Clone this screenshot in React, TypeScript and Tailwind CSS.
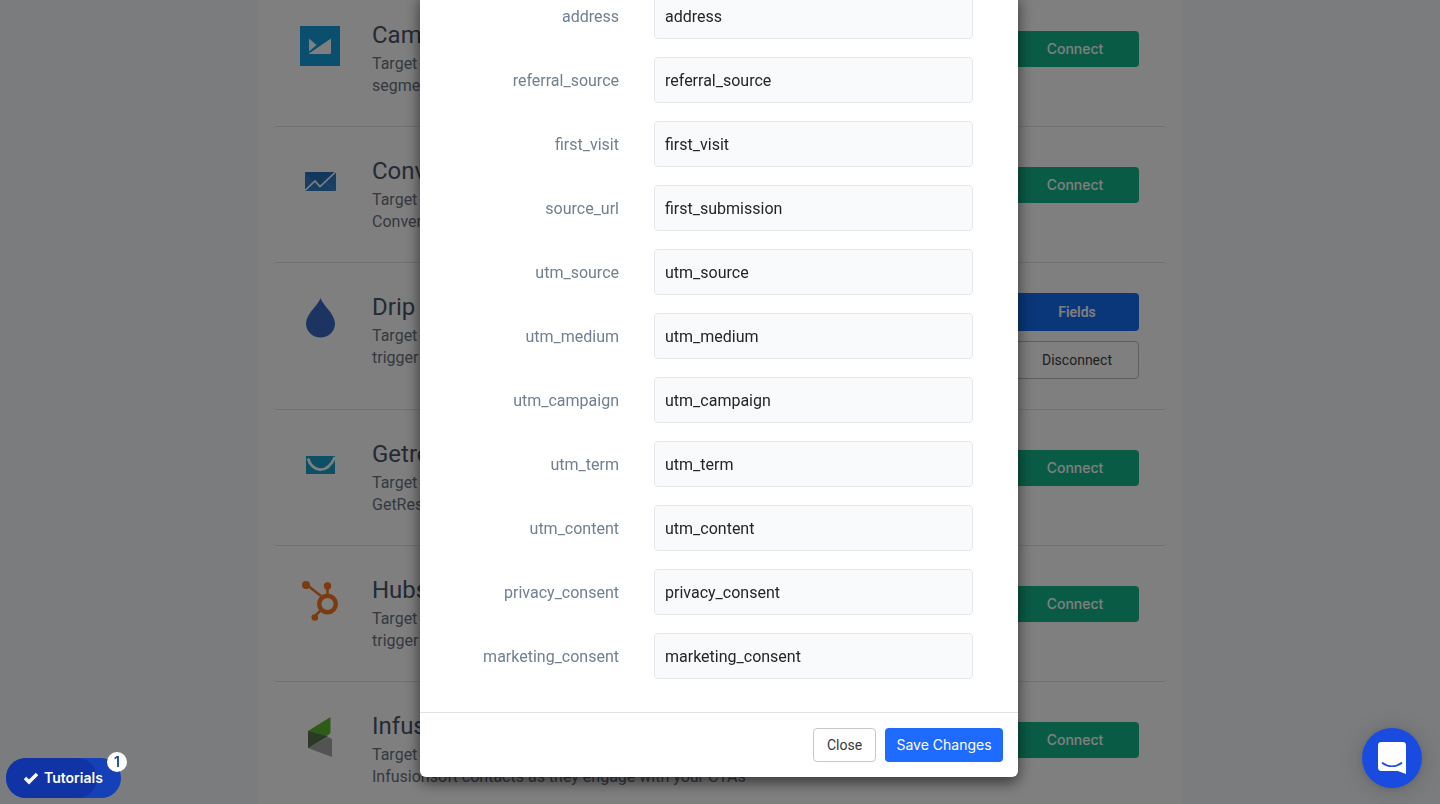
// src/pages/IntegrationsPage.tsx
import React, { useState } from 'react';

interface Integration {
  name: string;
  icon: React.ReactNode;
  lines: string[];
  connected?: boolean;
}

const CampaignMonitorIcon = () => (
  <svg className="h-10 w-10" viewBox="0 0 40 40">
    <path d="M0 0h40v40H0z" fill="#169fdc" />
    <path d="M9 12.500v13L16.500 19z" fill="#fff" />
    <path d="M31 12.500v14.500a1 1 0 0 1-1 1H10a1 1 0 0 1-1-.6z" fill="#fff" />
  </svg>
);

const ConvertKitIcon = () => (
  <svg className="h-10 w-10" viewBox="0 0 40 40">
    <rect x="5" y="10" width="31" height="19" rx="1" fill="#2f7ec9" />
    <path d="M5 11l12 12 3.500 2L35 10H6z" fill="#2670b8" />
    <path d="M26 21l9 8" stroke="#5b9bd5" strokeWidth="0.8" />
    <path d="M5 28.500l10-9.500 5 5.500L35.500 10" fill="none" stroke="#fff" strokeWidth="1.700" />
  </svg>
);

const DripIcon = () => (
  <svg className="h-10 w-10" viewBox="0 0 40 40">
    <path d="M20.500 0C18.500 7 6 16 6 25.500a14.500 14 0 0 0 29 0C35 16 22.500 7 20.500 0z" fill="#3a69c4" />
  </svg>
);

const GetResponseIcon = () => (
  <svg className="h-10 w-10" viewBox="0 0 40 40">
    <path d="M6 11h29v18H6z" fill="#1a9fcb" />
    <path d="M8 13.500C12 27 27 30 35 12" fill="none" stroke="#fff" strokeWidth="2.800" />
  </svg>
);

const HubSpotIcon = () => (
  <svg className="h-10 w-10" viewBox="0 0 40 40" fill="none" stroke="#f8761f">
    <circle cx="27.500" cy="23" r="8.300" strokeWidth="4.400" />
    <path d="M7 4l14 11M27.500 6v9M21 29l-6 6" strokeWidth="2.600" />
    <g fill="#f8761f" stroke="none">
      <circle cx="6" cy="4" r="4" />
      <circle cx="27.500" cy="5" r="3.700" />
      <circle cx="14.800" cy="36.500" r="3.300" />
    </g>
  </svg>
);

const InfusionsoftIcon = () => (
  <svg className="h-10 w-10" viewBox="0 0 40 40">
    <path d="M8 14L30.500 0v15a3 3 0 0 1-2 2.700L8 31z" fill="#5fb630" />
    <path d="M8 31l20-11 4 2V40z" fill="#a6a6a6" />
    <path d="M8 14l20 5.500L8 31z" fill="#56724d" />
  </svg>
);

const integrations: Integration[] = [
  {
    name: 'Campaign Monitor',
    icon: <CampaignMonitorIcon />,
    lines: ['Target Campaign Monitor subscribers and', 'segment contacts as they engage with your CTAs'],
  },
  {
    name: 'ConvertKit',
    icon: <ConvertKitIcon />,
    lines: ['Target ConvertKit subscribers and update', 'ConvertKit contacts as they engage with your CTAs'],
  },
  {
    name: 'Drip',
    icon: <DripIcon />,
    lines: ['Target Drip subscribers, update contacts and', 'trigger workflows as they engage with your CTAs'],
    connected: true,
  },
  {
    name: 'Getresponse',
    icon: <GetResponseIcon />,
    lines: ['Target GetResponse subscribers and update', 'GetResponse contacts as they engage with your CTAs'],
  },
  {
    name: 'Hubspot',
    icon: <HubSpotIcon />,
    lines: ['Target HubSpot contacts, update lists and', 'trigger workflows as they engage with your CTAs'],
  },
  {
    name: 'Infusionsoft',
    icon: <InfusionsoftIcon />,
    lines: ['Target Infusionsoft contacts and update', 'Infusionsoft contacts as they engage with your CTAs'],
  },
];

const initialFields: Record<string, string> = {
  address: 'address',
  referral_source: 'referral_source',
  first_visit: 'first_visit',
  source_url: 'first_submission',
  utm_source: 'utm_source',
  utm_medium: 'utm_medium',
  utm_campaign: 'utm_campaign',
  utm_term: 'utm_term',
  utm_content: 'utm_content',
  privacy_consent: 'privacy_consent',
  marketing_consent: 'marketing_consent',
};

const IntegrationRow: React.FC<{ item: Integration }> = ({ item }) => (
  <li className="flex min-h-[136px] items-start border-b border-[#dfe3e8] pt-[30px] pr-[26px] pb-[29px] pl-[25px]">
    <div className="mt-[5px] mr-8 shrink-0">{item.icon}</div>
    <div className="min-w-0 flex-1">
      <h4 className="mb-1 text-2xl leading-7 text-[#4a5568]">{item.name}</h4>
      <p className="leading-[22px] text-[#6b7280]">
        {item.lines[0]}
        <br />
        {item.lines[1]}
      </p>
    </div>
    {item.connected ? (
      <div className="mb-px flex w-[124px] shrink-0 flex-col gap-2.5">
        <button className="h-[38px] rounded bg-[#146ef5] text-sm font-semibold text-white">Fields</button>
        <button className="h-[38px] rounded border border-[#b8bcc2] text-sm text-[#3c4043]">Disconnect</button>
      </div>
    ) : (
      <button className="mt-2.5 h-9 w-32 shrink-0 rounded bg-[#15b78c] font-['Inter',sans-serif] text-sm font-medium text-white">
        Connect
      </button>
    )}
  </li>
);

const App: React.FC = () => {
  const [fields, setFields] = useState(initialFields);

  const handleChange = (name: string, value: string) => {
    setFields(prev => ({ ...prev, [name]: value }));
  };

  return (
    <div className="h-screen overflow-hidden bg-[#f7f9fc] font-['Roboto',sans-serif] text-base">
      {/* Integrations list */}
      <main className="mx-auto max-w-[922px] bg-white px-4">
        <ul className="-mt-[9px]">
          {integrations.map(item => (
            <IntegrationRow key={item.name} item={item} />
          ))}
        </ul>
      </main>

      {/* Field mapping modal */}
      <div className="fixed inset-0 flex items-end justify-center overflow-hidden bg-black/50 pb-[27px]">
        <div
          role="dialog"
          aria-label="Drip fields"
          className="mr-0.5 w-full max-w-[598px] rounded-md bg-white shadow-[0_5px_15px_rgba(0,0,0,0.6)]"
        >
          <div className="flex flex-col gap-[18px] pr-[45px] pb-[33px] pl-6">
            {Object.keys(fields).map(name => (
              <div key={name} className="flex items-center">
                <label htmlFor={name} className="flex-1 pt-0.5 pr-[35px] text-right text-[#718090]">
                  {name}
                </label>
                <input
                  id={name}
                  type="text"
                  value={fields[name]}
                  onChange={e => handleChange(name, e.target.value)}
                  className="h-[46px] w-[319px] rounded border border-[#e3e7ec] bg-[#f9fafc] px-2.5 text-[#222629]"
                />
              </div>
            ))}
          </div>
          <div className="flex justify-end gap-[9px] border-t border-[#dee2e6] p-[15px]">
            <button className="h-[34px] w-[63px] rounded border border-[#c4c8cc] bg-white text-sm text-[#33373b]">
              Close
            </button>
            <button className="h-[34px] w-[118px] rounded bg-[#206bff] font-['Inter',sans-serif] text-sm text-white">
              Save Changes
            </button>
          </div>
        </div>
      </div>

      {/* Tutorials launcher */}
      <button className="fixed bottom-1.5 left-1.5 flex h-10 w-[115px] items-center rounded-full bg-[#1440b8] font-['Inter',sans-serif] text-sm font-semibold text-white">
        <span className="absolute inset-y-0 left-0 w-[91px] rounded-full bg-[#1034a6]" />
        <svg className="relative ml-[18px] h-3.5 w-3.5" viewBox="0 0 14 14">
          <path d="M1 7l4 4L13 3" fill="none" stroke="#fff" strokeWidth="3.400" />
        </svg>
        <span className="relative ml-1.5">Tutorials</span>
        <span className="absolute -top-1.5 -right-1.5 flex h-5 w-5 items-center justify-center rounded-full bg-white text-[#1440b8]">
          1
        </span>
      </button>

      {/* Chat launcher */}
      <button
        aria-label="Open chat"
        className="fixed right-[18px] bottom-4 flex h-[60px] w-[60px] items-center justify-center rounded-full bg-[#1a4be0] shadow-[0_1px_6px_rgba(0,0,0,0.1),0_2px_24px_rgba(0,0,0,0.16)]"
      >
        <svg className="h-8 w-7" viewBox="0 0 28 32">
          <path d="M28 32s-4.700-1.900-8.400-3H3.400A3.400 3.400 0 0 1 0 25.600V3.400A3.400 3.400 0 0 1 3.400 0h21.200A3.400 3.400 0 0 1 28 3.400z" fill="#fff" />
          <path d="M4.500 21c5.500 4.300 13.500 4.300 19 0" fill="none" stroke="#1a4be0" strokeWidth="1.700" strokeLinecap="round" />
        </svg>
      </button>
    </div>
  );
};

export default App;
